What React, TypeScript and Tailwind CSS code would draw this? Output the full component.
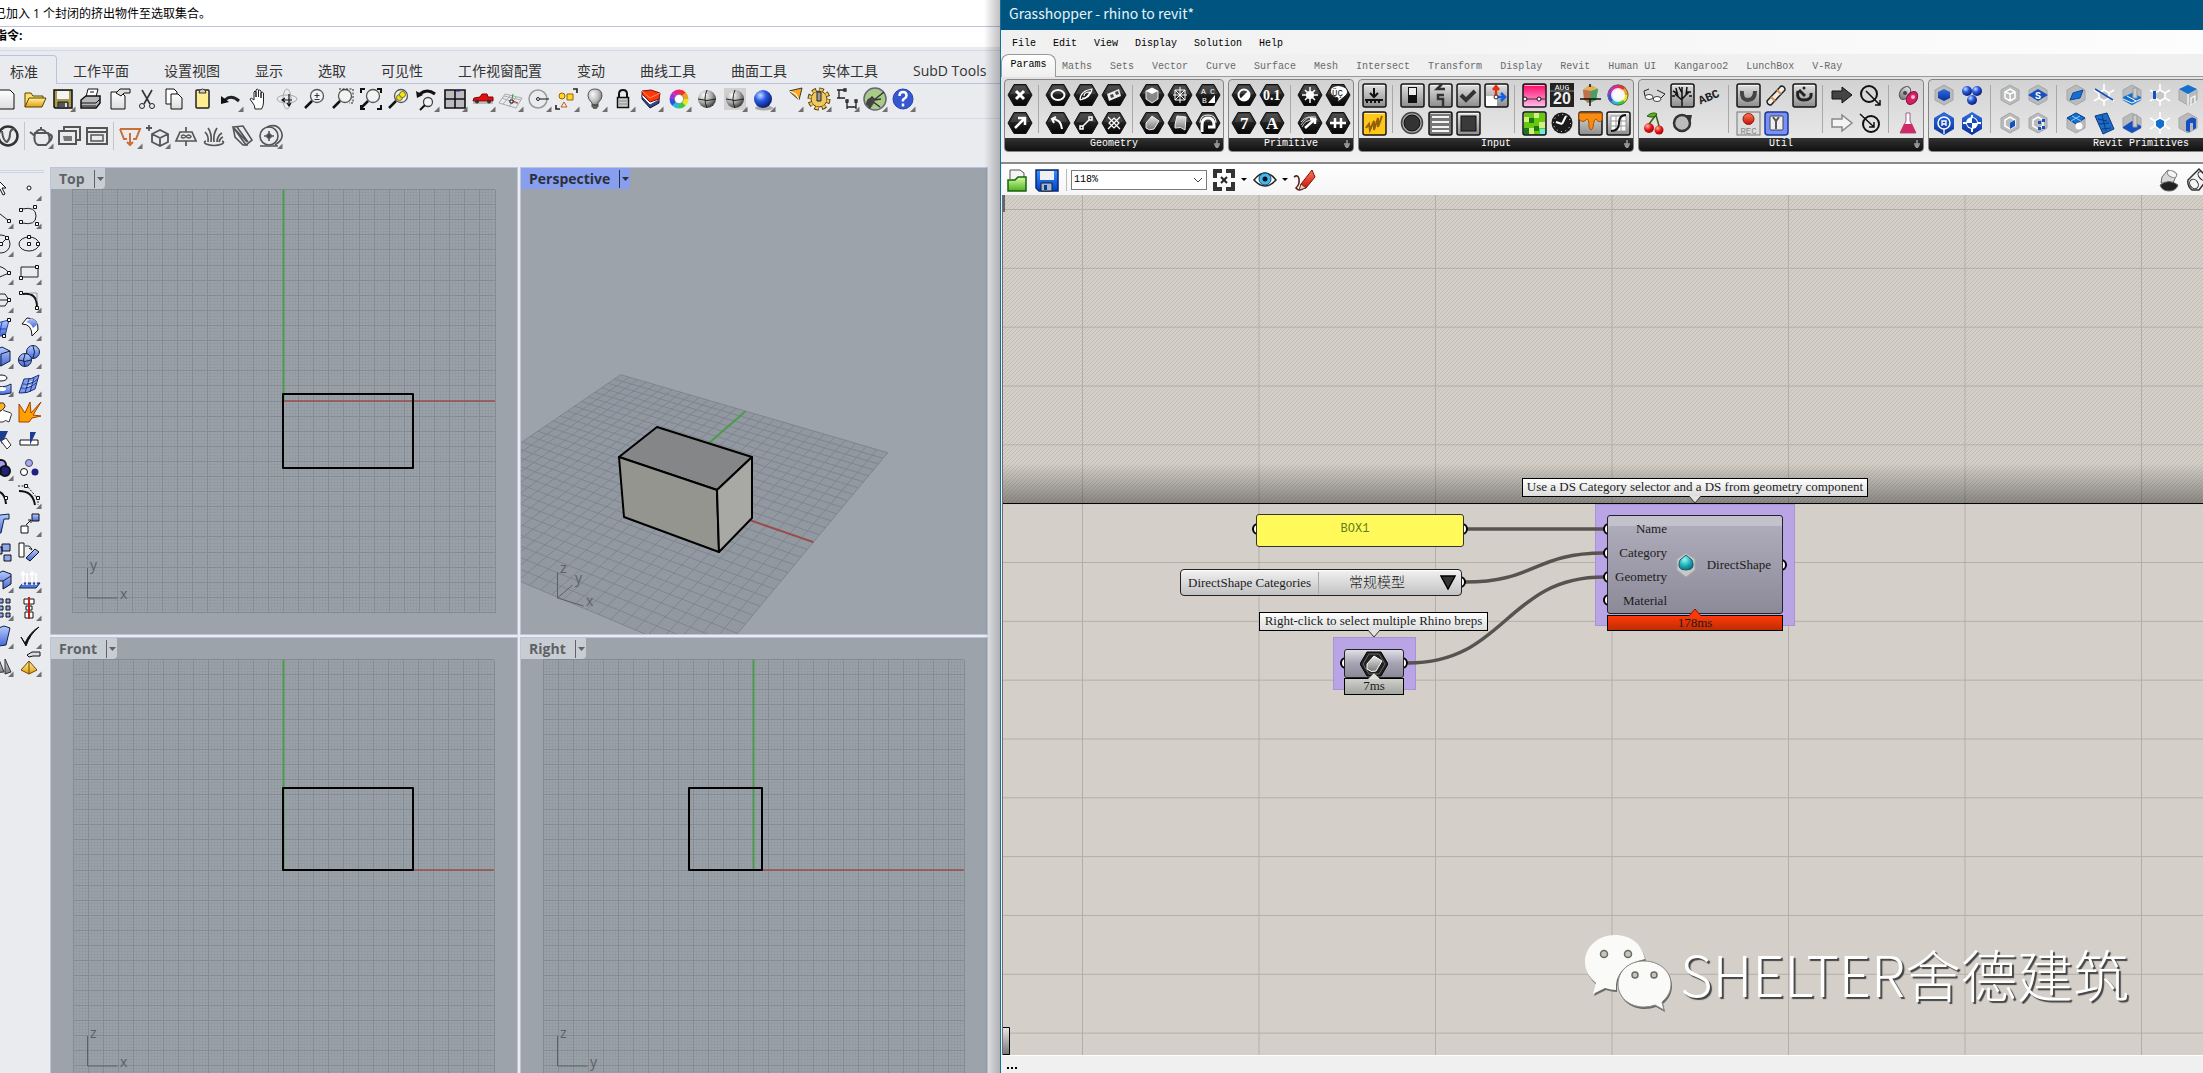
import type { ReactNode } from "react";

interface Tool {
  label: string;
  icon: ReactNode;
  menu?: boolean;
}

const k = "#111111";
const thin = { fill: "none", stroke: "#222", strokeWidth: 1 };
const bold = { fill: "none", stroke: "#111", strokeWidth: 2 };
const grey = { fill: "none", stroke: "#555", strokeWidth: 2 };
const white = { fill: "none", stroke: "#fff", strokeWidth: 2 };

/* shared gradients, referenced by every icon */
function Defs() {
  const ramps: [string, string, string][] = [
    ["gPaper", "#ffffff", "#dcdcdc"],
    ["gGold", "#fff3a0", "#e0a010"],
    ["gBlue", "#b8ccff", "#4468d8"],
    ["gGrey", "#e8e8e8", "#777777"],
    ["gTile", "#e2e2e2", "#8c8c8c"],
    ["gHex", "#3a3a3a", "#050505"],
    ["gRed", "#ff7a50", "#c01010"],
    ["gGreen", "#d4ffa0", "#50b020"],
    ["gSave", "#3a90ff", "#0040d0"],
    ["gPink", "#ff0060", "#ffc0f0"],
    ["gRevit", "#2f6ee0", "#0b2f9c"],
  ];
  return (
    <svg className="absolute size-0" aria-hidden="true">
      <defs>
        {ramps.map(([id, from, to]) => (
          <linearGradient key={id} id={id} x1="0" y1="0" x2="0" y2="1">
            <stop offset="0" stopColor={from} />
            <stop offset="1" stopColor={to} />
          </linearGradient>
        ))}
        <radialGradient id="rGrey" cx=".35" cy=".3" r=".8">
          <stop offset="0" stopColor="#fff" />
          <stop offset=".5" stopColor="#aaa" />
          <stop offset="1" stopColor="#222" />
        </radialGradient>
        <radialGradient id="rBlue" cx=".35" cy=".3" r=".8">
          <stop offset="0" stopColor="#c8e0ff" />
          <stop offset=".4" stopColor="#2a5ae8" />
          <stop offset="1" stopColor="#04104a" />
        </radialGradient>
        <radialGradient id="rRed" cx=".35" cy=".3" r=".8">
          <stop offset="0" stopColor="#ffb0a0" />
          <stop offset=".5" stopColor="#e01818" />
          <stop offset="1" stopColor="#900" />
        </radialGradient>
        <radialGradient id="rTeal" cx=".4" cy=".3" r=".8">
          <stop offset="0" stopColor="#a0f4f4" />
          <stop offset=".5" stopColor="#20b4bc" />
          <stop offset="1" stopColor="#0a5a70" />
        </radialGradient>
      </defs>
    </svg>
  );
}

function Icon({ children, menu }: { children: ReactNode; menu?: boolean }) {
  return (
    <svg viewBox="0 0 28 28" className="size-7" aria-hidden="true">
      {children}
      {menu && <path d="M26.500 21.500v5.500h-5.500z" fill="#6f6f6f" />}
    </svg>
  );
}

function ToolButton({ tool }: { tool: Tool }) {
  return (
    <button type="button" aria-label={tool.label} className="block size-7 shrink-0">
      <Icon menu={tool.menu}>{tool.icon}</Icon>
    </button>
  );
}

const magnifier = (
  <>
    <circle cx="16" cy="11" r="6.500" fill="#f2f4f4" stroke="#555" strokeWidth="1.300" />
    <path d="M11 16l-7 7" stroke="#111" strokeWidth="2.500" />
  </>
);
const colourWheel = (r: number) => (
  <g fill="none" strokeWidth="5">
    {["#f03030", "#f0a020", "#e8e820", "#40c840", "#20c0d8", "#3050e0", "#a030d8", "#e82090"].map((c, i) => (
      <path key={c} d={`M14 ${14 - r}A${r} ${r} 0 0 1 ${14 + r * 0.72} ${14 - r * 0.69}`} stroke={c} transform={`rotate(${i * 45} 14 14)`} />
    ))}
  </g>
);
const wireBall = (fill: string) => (
  <>
    <circle cx="14" cy="14" r="9" fill={fill} />
    <path d="M5 14q9 3 18 0M14 5q-4 9 0 18" fill="none" stroke="#222" />
  </>
);

const standardTools: Tool[] = [
  { label: "新建", icon: <path d="M6 5h11l4 4v15H6z" fill="url(#gPaper)" stroke={k} /> },
  {
    label: "打开",
    icon: (
      <>
        <path d="M4 22V8h6l2 3h10v4" fill="#ffe070" stroke="#5a4000" />
        <path d="M4 22l4-9h17l-4 9z" fill="url(#gGold)" stroke="#5a4000" />
      </>
    ),
  },
  {
    label: "保存",
    menu: true,
    icon: (
      <>
        <path d="M5 5h18v18H6l-1-1z" fill="#a89a50" stroke={k} strokeWidth="1.500" />
        <path d="M8 6h12v8H8z" fill="#f4f4f4" />
        <path d="M9 17h10v6H9z" fill="#555" stroke="#222" />
        <path d="M16 18h2v4h-2z" fill="#ddd" />
      </>
    ),
  },
  {
    label: "打印",
    icon: (
      <>
        <path d="M9 12l2-8h10l-2 8z" fill="#fff" stroke={k} />
        <path d="M4 15l5-4h14v7l-4 5H4z" fill="#b8b8b8" stroke={k} strokeWidth="1.500" />
        <path d="M4 18h15l4-4M4 21h15M13 7h4" fill="none" stroke={k} />
      </>
    ),
  },
  {
    label: "文件属性",
    icon: (
      <>
        <path d="M6 7h10l4 4v13H6z" fill="url(#gPaper)" stroke={k} />
        <path d="M11 8l4-4h10v4h-6l-3 3z" fill="#ddd" stroke={k} />
      </>
    ),
  },
  {
    label: "剪切",
    icon: (
      <>
        <path d="M9 5l8 14M19 5l-8 14" stroke="#333" strokeWidth="1.600" />
        <circle cx="9" cy="21" r="2.500" {...thin} />
        <circle cx="19" cy="21" r="2.500" {...thin} />
      </>
    ),
  },
  {
    label: "复制",
    icon: (
      <>
        <path d="M5 4h8l3 3v12H5z" fill="#fff" stroke={k} />
        <path d="M10 9h7l4 4v11H10z" fill="url(#gPaper)" stroke={k} />
      </>
    ),
  },
  {
    label: "粘贴",
    icon: (
      <>
        <rect x="7" y="5" width="13" height="18" rx="1" fill="#ffee90" stroke="#222" strokeWidth="1.500" />
        <path d="M10 8q0-4 3.500-4t3.500 4z" fill="#ccc" stroke="#333" />
      </>
    ),
  },
  {
    label: "撤销",
    menu: true,
    icon: (
      <>
        <path d="M8 15q6-6 14 1" fill="none" stroke="#222" strokeWidth="3" />
        <path d="M4 11v8l8-2z" fill={k} />
      </>
    ),
  },
  {
    label: "平移",
    icon: (
      <path
        d="M10 24q0-4-3-7l-2-3q1-2 4 1V7q1-2 2 0v5V5q1-2 2.500 0v7V6q1-2 2.500 0v7V8q1-2 2.500 0v9q0 4-2 7z"
        fill="#fff"
        stroke="#222"
      />
    ),
  },
  {
    label: "旋转视图",
    icon: (
      <g fill="none" stroke="#aaa">
        <ellipse cx="14" cy="14" rx="10" ry="4" />
        <ellipse cx="14" cy="14" rx="4" ry="10" />
        <path d="M16 9v11M10 15h9M14 18l2 3 2-3M12 13l-3 2 3 2" stroke="#111" strokeWidth="1.200" />
      </g>
    ),
  },
  { label: "动态缩放", icon: <>{magnifier}<path d="M16 8v5M13.500 10.500h5M13.500 14.500h5" stroke="#333" /></> },
  { label: "框选缩放", icon: <>{magnifier}<path d="M10 4h14v14h-4" fill="none" stroke="#222" strokeDasharray="2 1.500" /></> },
  {
    label: "缩放至最大范围",
    icon: (
      <>
        {magnifier}
        <path d="M4 8V4h4M20 4h4v4M24 20v4h-4M8 24H4v-4" fill="none" stroke="#111" strokeWidth="2" />
      </>
    ),
  },
  { label: "缩放至选取物件", icon: <>{magnifier}<circle cx="14.500" cy="12.500" r="3" fill="#f0e000" stroke="#665" /><circle cx="17.500" cy="9.500" r="3" fill="#f8e800" stroke="#665" /></> },
  {
    label: "上一个视图",
    menu: true,
    icon: (
      <>
        <path d="M7 9q7-6 15 0" {...bold} strokeWidth="3" />
        <path d="M3 6l1 7 6-3z" fill={k} />
        <circle cx="15" cy="17" r="4.500" fill="#f2f4f4" stroke="#444" strokeWidth="1.300" />
        <path d="M12 20l-5 5" {...bold} />
      </>
    ),
  },
  {
    label: "四个视图",
    menu: true,
    icon: (
      <>
        <path d="M4 5h20v18H4z" fill="#bcbcc0" stroke={k} strokeWidth="1.600" />
        <path d="M14 5v18M4 14h20" stroke={k} strokeWidth="1.600" />
        <path d="M15 6h4" stroke="#1020c0" />
      </>
    ),
  },
  {
    label: "车",
    menu: true,
    icon: (
      <>
        <path d="M4 18h20" stroke="#bbb" strokeWidth="2" />
        <path d="M4 16l1-3 6-1 2-3h5l1 3h5v4z" fill="#e01010" stroke="#800" />
        <circle cx="8" cy="16.500" r="2" fill="#333" />
        <circle cx="20" cy="16.500" r="2" fill="#333" />
      </>
    ),
  },
  {
    label: "工作平面",
    menu: true,
    icon: (
      <>
        <path d="M8 9l17 4-6 10-17-5zM5 13l16 6M7 11l17 4M14 10l-8 9M19 12l-7 10" fill="none" stroke="#aaa" />
        <path d="M13 15h3v3h-3z" fill="#fff" stroke={k} />
        <path d="M16 16l5 2" stroke="#c02020" />
        <path d="M16 9l-1 5" stroke="#20a020" />
      </>
    ),
  },
  {
    label: "半径",
    menu: true,
    icon: (
      <>
        <circle cx="13" cy="14" r="9" fill="none" stroke="#999" strokeWidth="1.500" />
        <circle cx="13" cy="14" r="1.500" {...thin} />
        <path d="M15 14h9" stroke="#111" />
      </>
    ),
  },
  {
    label: "物件捕捉",
    menu: true,
    icon: (
      <>
        <circle cx="9" cy="11" r="3" fill="#ffd820" stroke="#a06000" />
        <path d="M14 9h6v6h-6z" fill="#ffd820" stroke="#a06000" />
        <path d="M11 17l3 5H8z" fill="none" stroke="#c06020" />
        <path d="M20 4h4v4M3 20v4h4" {...thin} strokeWidth="1.600" />
      </>
    ),
  },
  {
    label: "灯光",
    menu: true,
    icon: (
      <>
        <path d="M14 4q7 0 7 7 0 3-4 7v4h-6v-4q-4-4-4-7 0-7 7-7z" fill="url(#rGrey)" fillOpacity="0.700" stroke="#555" />
        <path d="M11 20h6M12 23h4" stroke="#444" strokeWidth="1.500" />
      </>
    ),
  },
  {
    label: "锁定",
    menu: true,
    icon: (
      <>
        <path d="M10 13V9q0-4 4-4t4 4v4" {...bold} />
        <rect x="8.500" y="12.500" width="11" height="10" fill="#ccc" stroke={k} strokeWidth="1.500" />
        <path d="M10 16h8M10 19h8" stroke="#888" />
      </>
    ),
  },
  {
    label: "图层",
    menu: true,
    icon: (
      <>
        <path d="M5 14l8 9 9-5v-5l-9 5-8-8z" fill="#2848a0" stroke="#112" />
        <path d="M5 9v3l8 8 9-5v-3l-9 4z" fill="#fff" stroke="#446" />
        <path d="M5 6l9-1 9 3-1 6-9 3-8-8z" fill="#ff3808" stroke="#711" />
        <path d="M5 6l8 7 10-5" fill="none" stroke="#ff9060" />
      </>
    ),
  },
  { label: "颜色", menu: true, icon: <>{colourWheel(7)}<circle cx="14" cy="14" r="4.500" fill="#fff" stroke="#444" strokeWidth="0.500" /></> },
  { label: "着色", icon: wireBall("url(#rGrey)") },
  {
    label: "渲染着色",
    menu: true,
    icon: (
      <>
        <rect x="3" y="3" width="22" height="22" fill="#d0d0d0" />
        {wireBall("url(#rGrey)")}
      </>
    ),
  },
  { label: "渲染", menu: true, icon: <><ellipse cx="15" cy="23" rx="9" ry="2.500" fill="#aaa" /><circle cx="14" cy="14" r="9" fill="url(#rBlue)" /></> },
  { label: "聚光灯", menu: true, icon: <><path d="M12 6l13-3-3 12z" fill="#ffa820" stroke="#333" /><path d="M12 6l7 3 3 6" fill="none" stroke="#fff" /></> },
  {
    label: "选项",
    menu: true,
    icon: (
      <>
        <circle cx="14" cy="14" r="9.500" fill="none" stroke="#5a4000" strokeWidth="4" strokeDasharray="4.500 2.960" />
        <circle cx="14" cy="14" r="8" fill="#f0c860" stroke="#5a4000" />
        <circle cx="14" cy="14" r="9.200" fill="none" stroke="#f0c860" strokeWidth="2.600" strokeDasharray="3 4.220" strokeDashoffset="-0.500" />
        <path d="M12 7h4v9h-4z" fill="#999" stroke="#222" />
      </>
    ),
  },
  {
    label: "尺寸标注",
    menu: true,
    icon: (
      <g {...thin} strokeWidth="1.300">
        <path d="M4 5h8M4 13h8M6 5v8M14 16v8M23 16v8M14 22h9" />
        <path d="M11 4h2v2h-2zM13 15h2v2h-2zM22 15h2v2h-2z" fill="#fff" />
      </g>
    ),
  },
  {
    label: "Grasshopper",
    menu: true,
    icon: (
      <>
        <circle cx="14" cy="14" r="11" fill="#a8cc88" stroke="#667" strokeWidth="1.500" />
        <path d="M6 20q0-5 3-6l2-2 3 3 6-1M13 15L23 7M11 16l8 6" fill="none" stroke="#333" strokeWidth="1.500" />
        <path d="M5 19q1-7 6-6 4 1 2 5l-4 6z" fill="#444" />
      </>
    ),
  },
  {
    label: "说明",
    menu: true,
    icon: (
      <>
        <circle cx="14" cy="14" r="10" fill="#3558d0" stroke="#24a" />
        <path d="M10.500 11q0-4 3.500-4t3.500 3.500q0 2-2 3t-1.500 3M14 18.500v3" {...white} strokeWidth="2.500" />
      </>
    ),
  },
];

const renderTools: Tool[][] = [
  [{ label: "V-Ray", icon: <><circle cx="14" cy="14" r="9.500" {...grey} strokeWidth="2.500" stroke="#333" /><path d="M8 9q1 10 5 11 3-3 3-8t5-5" {...grey} /></> }],
  [
    {
      label: "渲染",
      menu: true,
      icon: (
        <g {...grey}>
          <path d="M8 11q-2 10 3 12h8q6-4 2-12zM8 14l-5-4M22 12q6 2 0 8M9 10q5-5 10 0M14 7V5" />
        </g>
      ),
    },
    {
      label: "帧缓存",
      icon: (
        <g {...grey}>
          <path d="M9 9V5h16v13h-3M4 9h17v13H4z" />
          <path d="M8 14h9v5H9z" fill="#777" stroke="none" />
        </g>
      ),
    },
    { label: "窗口", icon: <g {...grey}><path d="M4 6h20v16H4zM4 10h20" /><path d="M8 13h12v6H8z" strokeWidth="1.500" /></g> },
  ],
  [
    { label: "导出", menu: true, icon: <path d="M4 7h20l-4 10h-3M4 7l4 10h3M14 11v12M11 20l3 3 3-3" fill="none" stroke="#c87038" strokeWidth="2" /> },
    { label: "添加几何体", menu: true, icon: <g {...grey} strokeWidth="1.800"><path d="M8 12l8-4 8 4v8l-8 4-8-4zM8 12l8 4 8-4M16 16v8M5 3v6M2 6h6" /></g> },
    { label: "裁切", icon: <g {...grey} strokeWidth="1.700"><path d="M8 10h12l4 9H4zM14 5v5M14 19v5" /><path d="M9 14.500q2-3 5 0t5 0q-2-3-5 0t-5 0" strokeWidth="1.500" /></g> },
    { label: "毛发", icon: <g {...grey} strokeWidth="1.700"><path d="M6 22q-3-2 0-3M22 22q3-2 0-3M6 22q8 3 16 0M8 20q1-6-3-10M11 20q1-9-3-14M14 20q-1-8 3-14M17 20q0-6 5-9M19 20q1-4 4-5" /></g> },
    { label: "剖面", icon: <g {...grey}><path d="M5 5l10-1 9 14-6 5zM5 5l2 10 8 8h5M9 5l11 15M5 5l14 15" strokeWidth="1.600" /></g> },
    { label: "焦点", menu: true, icon: <g {...grey} strokeWidth="1.600"><circle cx="13" cy="14" r="9" /><path d="M11 5q10-4 14 4t-6 14M13 9v10M8 14h10M4 24h18" /><circle cx="13" cy="14" r="2" fill="#444" /></g> },
  ],
];

const node = (x: number, y: number) => <path d={`M${x - 1.5} ${y - 1.5}h3v3h-3z`} fill="#fff" stroke={k} />;

/* two tools per row: the left one is half hidden by the window edge */
const sideTools: Tool[] = [
  { label: "选择", icon: <path d="M10 5v13l3-3 3 6 2-1-3-6h4z" fill="#fff" stroke={k} /> },
  { label: "点", menu: true, icon: <circle cx="14" cy="14" r="2" fill="#fff" stroke={k} /> },
  { label: "直线", menu: true, icon: <><path d="M8 8l14 11" {...thin} />{node(22, 19)}</> },
  { label: "曲线", menu: true, icon: <><path d="M7 7q14-3 14 7t-14 7" {...thin} />{node(6, 8)}{node(20, 5)}{node(6, 20)}{node(22, 22)}</> },
  { label: "圆", menu: true, icon: <><circle cx="14" cy="14" r="9" {...thin} /><path d="M14 14l6-6" {...thin} />{node(14, 14)}{node(20, 8)}</> },
  { label: "椭圆", menu: true, icon: <><ellipse cx="14" cy="14" rx="10" ry="7" {...thin} />{node(14, 7)}{node(14, 14)}{node(23, 14)}</> },
  { label: "圆弧", menu: true, icon: <><path d="M6 8q10-1 16 7L8 21" {...thin} />{node(22, 15)}</> },
  { label: "矩形", menu: true, icon: <><path d="M6 9h17v10H6z" {...thin} />{node(22, 9)}{node(6, 20)}</> },
  { label: "多边形", menu: true, icon: <><path d="M7 8h11l4 6-4 6H7M9 14h13" {...thin} />{node(22, 14)}</> },
  { label: "圆角曲线", menu: true, icon: <><path d="M8 8q14-2 14 13" {...bold} /><path d="M14 7h8v8" {...thin} stroke="#999" />{node(6, 7)}{node(22, 22)}</> },
  { label: "曲面", menu: true, icon: <><path d="M6 10l16-4-4 16H6z" fill="url(#gBlue)" stroke="#24a" /><path d="M6 15h14M15 8l-3 14" {...thin} stroke="#24a" />{node(22, 6)}{node(17, 22)}</> },
  { label: "单轨扫掠", menu: true, icon: <><path d="M7 10l5-6q12 0 11 12l-6 6q0-12-10-12z" fill="#fff" stroke={k} /><path d="M11 8l5-4q5 2 7 6l-5 4q-2-5-7-6z" fill="url(#gBlue)" /></> },
  { label: "立方体", menu: true, icon: <><path d="M6 9l9-4 8 4v10l-9 5-8-3z" fill="url(#gBlue)" stroke="#123" /><path d="M14 12l9-3M14 12v12" stroke="#124" fill="none" /></> },
  { label: "球体", menu: true, icon: <><circle cx="18" cy="10" r="6.500" fill="url(#gBlue)" stroke="#124" /><circle cx="10" cy="18" r="6.500" fill="url(#gBlue)" stroke="#124" /><path d="M4 18q6 3 12 0M10 12q-3 6 0 12M18 4q3 6 0 12" {...thin} stroke="#124" /></> },
  { label: "管道", menu: true, icon: <><ellipse cx="14" cy="8" rx="6" ry="3" fill="#fff" stroke={k} /><path d="M6 15q10 4 18-1v9q-8 3-18 0z" fill="url(#gBlue)" stroke="#124" /><ellipse cx="14" cy="19" rx="5" ry="2" fill="#fff" /></> },
  { label: "网格曲面", menu: true, icon: <path d="M9 9q7 1 15-4l-4 14q-8 5-16 4zM8 14q7 1 15-5M6 18q8 1 15-5M14 9l-4 14M19 8l-4 14" fill="#7c9cf0" stroke="#1a3080" /> },
  { label: "组合", icon: <><path d="M10 5h4q4-1 4 4l-4 4h-5z" fill="#ffb020" stroke="#333" /><path d="M8 14l6-1q1-3 4 0l3 1q5 1 3 4l-2 6q-4-3-6 0H9z" fill="#fff" stroke="#333" /></> },
  { label: "炸开", icon: <path d="M4 24V6l6 9 5-11 1 11L26 4l-8 13 8 1-9 2-3 4z" fill="#ffa000" stroke="#a04000" /> },
  { label: "修剪", icon: <><path d="M8 5h13l-6 13z" fill="#1c3c90" /><path d="M14 15l5-3 5 7-4 4z" fill="#fff" stroke="#333" /></> },
  { label: "分割", icon: <><path d="M5 14h18v5H5z" fill="#fff" stroke={k} /><path d="M15 6h6l-6 13z" fill="#1c3c90" /></> },
  { label: "群组", menu: true, icon: <><circle cx="14" cy="11" r="5" fill="#a0a0f0" stroke={k} strokeWidth="2" /><circle cx="18" cy="17" r="5" fill="#202080" stroke={k} strokeWidth="2" /><circle cx="9" cy="17" r="5" fill="#fff" stroke={k} strokeWidth="2" /></> },
  { label: "解散群组", icon: <><circle cx="14" cy="9" r="3.500" fill="#a8a8f0" stroke="#446" /><circle cx="9" cy="18" r="3.500" fill="#fff" stroke={k} /><circle cx="20" cy="18" r="3.500" fill="#202080" /></> },
  { label: "编辑控制点", icon: <><path d="M8 9q10 0 11 13" {...bold} />{node(19, 16)}</> },
  { label: "编辑点", menu: true, icon: <><path d="M4 9q14 0 16 14" {...bold} /><path d="M3 4h9l11 13v6" {...thin} strokeDasharray="2 1.500" />{node(11, 4)}{node(23, 16)}</> },
  { label: "文字", icon: <path d="M5 6l17-2v5h-5l-3 14H9l2-14H5z" fill="url(#gBlue)" stroke="#124" /> },
  { label: "移动", menu: true, icon: <><path d="M17 4h7v7h-7z" fill="url(#gBlue)" stroke={k} /><path d="M6 16h7v7H6zM11 15l5-5M16 13v-3h-3" fill="#fff" stroke={k} /></> },
  { label: "复制物件", icon: <path d="M15 6h8v7h-8zM8 9h7v7H8zM17 17h7v6h-7z" fill="#90a8f0" stroke={k} /> },
  { label: "旋转", icon: <><path d="M4 5h5v14H4z" fill="#fff" stroke={k} /><path d="M11 20l9-9 4 3-9 9z" fill="url(#gBlue)" stroke={k} /><path d="M10 8q6-1 7 4M14 10l3 2" {...thin} /></> },
  { label: "实体", menu: true, icon: <><path d="M5 10l11-5 8 3v10l-8 5v-8H5z" fill="url(#gBlue)" stroke="#112" /><path d="M16 15l8-5" {...thin} /></> },
  { label: "对齐", menu: true, icon: <><path d="M8 17h17l-4 5H4z" fill="#5078e0" stroke="#124" /><path d="M8 19V7M12 19V7M17 19V7M21 19V7M6 9l2-3 2 3M15 9l2-3 2 3" {...white} strokeWidth="1.600" /></> },
  { label: "阵列", menu: true, icon: <path d="M5 5h4v4H5zM12 5h4v4h-4zM19 5h4v4h-4zM5 12h4v4H5zM12 12h4v4h-4zM19 12h4v4h-4zM12 19h4v4h-4zM19 19h4v4h-4z" fill="#90a8f0" stroke={k} /> },
  { label: "分布", menu: true, icon: <><path d="M9 5h10v5H9zM11 12h6v4h-6zM10 18h8v6h-8z" fill="#fff" stroke={k} /><path d="M14 3v22" stroke="#c02020" strokeWidth="2" /></> },
  { label: "弯曲", menu: true, icon: <path d="M9 7l8-3 6 2-4 17-7 1z" fill="url(#gBlue)" stroke="#124" /> },
  { label: "检查", menu: true, icon: <path d="M6 15l4 6Q15 10 24 5q-9 7-13 19z" fill={k} stroke={k} /> },
  { label: "显示", menu: true, icon: <path d="M11 7l6 15-12 1zM18 9l6 13-6 2z" fill="url(#gGrey)" stroke="#333" /> },
  { label: "金字塔", menu: true, icon: <><path d="M14 11l8 9-8 4-8-4z" fill="url(#gGold)" stroke="#740" /><path d="M14 11v13" stroke="#740" /><path d="M12 5l5-3h8v4h-7l-4 1z" fill="#ddd" stroke={k} /></> },
];

const hex = (icon: ReactNode) => (
  <>
    <path d="M2 14L8 3.500h12L26 14l-6 10.500H8z" fill="url(#gHex)" stroke="#111" strokeLinejoin="round" />
    <path d="M4 13l5-8h10l5 8z" fill="#fff" fillOpacity="0.120" />
    {icon}
  </>
);
const tile = (icon: ReactNode, fill = "url(#gTile)") => (
  <>
    <rect x="3" y="3" width="23" height="23" rx="2" fill={fill} stroke="#151515" strokeWidth="1.500" />
    <path d="M4.500 4.500h20" stroke="#fff" strokeOpacity="0.700" />
    {icon}
  </>
);
const revit = (icon: ReactNode) => (
  <>
    <path d="M14 4l9 5v10l-9 5-9-5V9z" fill="#b8babc" stroke="#a4a6a8" />
    {icon}
  </>
);
const spokes = <path d="M14 9l5 3v5l-5 3-5-3v-5zM14 9V3M19 12l5-3M19 17l5 3M14 20v5M9 17l-5 3M9 12L4 9" fill="#c4c6c8" stroke="#fff" strokeWidth="1.600" />;
const glyph = "font-['Liberation_Serif',serif] font-bold";

type Pair = [Tool, Tool?];
interface Panel {
  name: string;
  groups: Pair[][];
  width: string;
}
const t = (label: string, icon: ReactNode): Tool => ({ label, icon });

const panels: Panel[] = [
  {
    name: "Geometry",
    width: "",
    groups: [
      [[t("Geometry", hex(<path d="M10 10l8 8M18 10l-8 8" {...white} strokeWidth="3" />)), t("Vector", hex(<path d="M9 19l9-9M12 9h7v7" {...white} strokeWidth="2.500" />))]],
      [
        [t("Circle", hex(<ellipse cx="14" cy="14" rx="6.500" ry="5" {...white} />)), t("Arc", hex(<path d="M8 10q9 0 10 10M12 8l-4 2 2 4" {...white} />))],
        [t("Curve", hex(<path d="M8 19q0-9 12-11-1 9-12 11M10 17q5 1 8-6-6 0-6 4" {...white} strokeWidth="1.200" />)), t("Line", hex(<path d="M10 18l8-8M8 17h3v3H8zM17 8h3v3h-3z" {...white} strokeWidth="1.500" />))],
        [t("Plane", hex(<><path d="M7 13l12-5 2 7-12 5z" fill="#eee" /><path d="M10 14l3-1 1 3-3 1zM15 11l3-1 1 3-3 1z" fill="#444" /></>)), t("Rectangle", hex(<path d="M14 9l5 5-5 5-5-5zM8 8l12 12M20 8L8 20" {...white} strokeWidth="1.200" />))],
      ],
      [
        [t("Box", hex(<><path d="M14 7l6 3v8l-6 4-6-4v-8z" fill="#888" stroke="#eee" /><path d="M8 10l6-3 6 3-6 3z" fill="#fff" /></>)), t("Brep", hex(<path d="M8 14l6-7 7 5-5 8q-5 2-8-1z" fill="url(#gGrey)" stroke="#eee" />))],
        [t("Mesh", hex(<path d="M14 6v16M7 14h14M9 9l10 10M19 9L9 19M9 9h10v10H9z" {...white} strokeWidth="1" />)), t("Surface", hex(<path d="M9 16l2-9 9 1-1 13q-4-4-10-2z" fill="url(#gGrey)" stroke="#eee" />))],
        [t("Field", hex(<><text x="7" y="13" fontSize="8" fill="#fff">A</text><text x="16" y="13" fontSize="8" fill="#fff">C</text><text x="8" y="22" fontSize="8" fill="#fff">B</text><path d="M21 14v8h-7z" fill="#fff" /></>)), t("SubD", hex(<><path d="M8 23v-7q0-7 6-7t6 7v2h-6" {...white} strokeWidth="3" /><path d="M6 14q0-8 8-8t8 8" {...white} strokeWidth="1" /></>))],
      ],
    ],
  },
  {
    name: "Primitive",
    width: "",
    groups: [
      [
        [t("Boolean", hex(<><circle cx="14" cy="14" r="5.500" {...white} /><path d="M10 18A5.500 5.500 0 0 0 18 10z" fill="#fff" /></>)), t("Integer", hex(<text x="10" y="20" fontSize="17" fill="#fff" className={glyph}>7</text>))],
        [t("Number", hex(<text x="5" y="19" fontSize="14" fill="#fff" className={glyph}>0.1</text>)), t("Text", hex(<text x="8" y="20" fontSize="17" fill="#fff" className={glyph}>A</text>))],
      ],
      [
        [t("Colour", hex(<><path d="M14 6v16M6 14h16M9 9l10 10M19 9L9 19" {...white} strokeWidth="1.500" /><circle cx="14" cy="14" r="4" fill="#fff" /></>)), t("Domain", hex(<><path d="M9 19l9-8M14 10h5v5" {...white} strokeWidth="2.500" /><path d="M5 13q7-9 16-2M5 16q6-10 15-8M6 18q3-7 10-7" {...white} strokeWidth="0.700" /></>))],
        [t("Culture", hex(<><path d="M7 7q7-5 15 0 4 5-2 9l-6 5v-4q-10-2-7-10z" fill="#fff" stroke="#222" /><text x="8" y="15" fontSize="9" fill="#111">ÜÇ</text></>)), t("Range", hex(<path d="M6 14h16M11 9v10M17 9v10" {...white} strokeWidth="2.500" />))],
      ],
    ],
  },
  {
    name: "Input",
    width: "",
    groups: [
      [[t("Slider", tile(<path d="M14 7v8M10 12l4 4 4-4M5 19h18M7 19v3M11 19v3M15 19v3M19 19v3" {...bold} />)), t("Graffiti", tile(<path d="M6 19l3-4 1 6 4-9v9l4-12v9l4-11" fill="none" stroke="#94600c" strokeWidth="2" />, "#ffc818"))]],
      [
        [t("Toggle", tile(<><path d="M10 6h9v16h-9z" fill="#111" /><path d="M11 7h7v7h-7z" fill="#eee" /></>)), t("Knob", <><circle cx="14" cy="14" r="10.500" fill="#aaa" stroke="#444" strokeWidth="1.500" /><circle cx="14" cy="14" r="8" fill="#333" stroke="#111" /></>)],
        [t("Digit Scroller", tile(<path d="M16 3l-5 5h8M18 14h-6v4h5v7" fill="none" stroke="#333" strokeWidth="2.500" />)), t("Value List", tile(<path d="M6 8h17M6 13h17M6 18h17M6 22h17" stroke="#f4f4f4" strokeWidth="2" />, "#777"))],
        [t("Boolean Toggle", tile(<path d="M7 14l5 5 9-9" {...bold} stroke="#333" strokeWidth="4" />)), t("Button", tile(<rect x="7" y="7" width="15" height="15" fill="#3a3a3a" stroke="#111" />))],
        [t("MD Slider", tile(<><path d="M4 15h11v10H4z" fill="#fff" /><path d="M14 14V6M11 9l3-4 3 4" stroke="#e03010" strokeWidth="2.500" fill="none" /><path d="M14 16h8M19 12l4 4-4 4" stroke="#1060e0" strokeWidth="2.500" fill="none" /><circle cx="14" cy="16" r="2" fill="#fff" stroke="#222" /></>))],
      ],
      [
        [
          t("Gradient", tile(<><path d="M4 18h21" stroke="#333" /><circle cx="5" cy="18" r="2" fill="#fff" stroke="#111" /><circle cx="19" cy="18" r="2" fill="#fff" stroke="#111" /></>, "url(#gPink)")),
          t("Image Sampler", tile(<><path d="M4 4h21v21H4z" fill="#68c810" /><path d="M4 8h5v5H4zM14 4h5v5h-5zM19 13h6v6h-6zM9 19h5v6H9z" fill="#d0f080" /><path d="M9 9h5v5H9zM4 19h5v6H4zM14 17h5v5h-5z" fill="#187818" /><path d="M20 20h5v5h-5z" fill="#60f0e0" /></>)),
        ],
        [t("Calendar", <><path d="M2 2h24v24H2z" fill="#222" /><path d="M2 10h24" stroke="#888" /><text x="14" y="9" fontSize="8" textAnchor="middle" fill="#fff">AUG</text><text x="14" y="23" fontSize="16" fontWeight="bold" textAnchor="middle" fill="#eee" className="font-['Liberation_Sans',sans-serif]">20</text></>), t("Clock", <><circle cx="14" cy="14" r="10.500" fill="#1a1a1a" /><path d="M14 15l4-8M14 15l-6-2" {...white} /><circle cx="14" cy="14" r="8.500" fill="none" stroke="#fff" strokeDasharray="1 3.450" /></>)],
        [t("Colour Swatch", <><path d="M7 9l7-5 8 4-2 11-9 3z" fill="#50a050" /><path d="M7 9l8 1 7-2-8-4z" fill="#e8b050" /><path d="M15 10l7-2-2 11-6 3z" fill="#48a068" /><path d="M7 9l8 1-1 12-6-3z" fill="#c07050" /><path d="M4 18h21M14 18v7M14 3v3" stroke="#111" strokeWidth="1.500" /></>), t("Paint", tile(<path d="M3 4h23v7q-3 4-6-1-2 0-3 8-2 6-4 0 0-8-2-8-4 5-8 0z" fill="#f88c10" stroke="#b05000" />))],
        [t("Colour Picker", <>{colourWheel(8)}<circle cx="14" cy="14" r="7" fill="#fff" fillOpacity="0.850" /><circle cx="14" cy="14" r="10" fill="none" stroke="#666" /></>), t("Graph Mapper", tile(<><path d="M7 7h15v15H7zM12 7v15M17 7v15M7 12h15M7 17h15" fill="#fff" stroke="#999" /><path d="M7 22q8 0 8-8t7-8" {...bold} /></>))],
      ],
    ],
  },
  {
    name: "Util",
    width: "",
    groups: [
      [
        [t("Param Viewer", <><ellipse cx="9" cy="16" rx="4" ry="2.500" fill="#fff" stroke="#444" /><ellipse cx="17" cy="18" rx="4" ry="2.500" fill="#fff" stroke="#444" /><path d="M5 15L4 10l5-2M21 17l4-4-8-4M13 17l1 1" {...thin} /></>), t("Cherry Picker", <><circle cx="9" cy="19" r="5" fill="url(#rRed)" /><circle cx="19" cy="21" r="4.500" fill="url(#rRed)" /><path d="M9 15l7-9 3 11" fill="none" stroke="#386010" strokeWidth="1.500" /><path d="M7 7q6-5 10-2-3 5-10 2z" fill="#60b020" stroke="#286008" /></>)],
        [t("Tree", tile(<path d="M14 25v-9M14 19l-7-6M14 18l7-7M14 16V6M10 16l-2-9M18 14l1-8M14 12l-3-6M5 10l5 3M23 11h-5M7 15H4M21 15h3" {...bold} strokeWidth="1.500" />)), t("Jump", <><circle cx="14" cy="14" r="8" fill="#bbb" stroke="#333" strokeWidth="2.500" /><path d="M17 6h7l-2 9z" fill="#333" /></>)],
        [t("Scribble", <text x="2" y="20" fontSize="12" fontWeight="bold" transform="rotate(-22 12 16)" fill="#222">ABC</text>)],
      ],
      [
        [t("Data Dam", tile(<path d="M8 10q-1 9 6 9t7-9" {...bold} stroke="#444" strokeWidth="4" />)), t("Recorder", <><rect x="3" y="3" width="23" height="23" fill="#ddd" stroke="#777" /><circle cx="14.500" cy="10" r="5.500" fill="url(#gRed)" stroke="#902000" /><text x="14.500" y="25" fontSize="9" textAnchor="middle" fill="#888">REC</text></>)],
        [t("Cluster", <><path d="M5 20L19 5q4 0 4 4L9 24q-4 0-4-4z" fill="#eee" stroke="#222" strokeWidth="1.500" /><path d="M9 16l4 4M15 9l4 4" stroke="#e09040" strokeWidth="2" /></>), t("Zip", <><rect x="3" y="3" width="23" height="23" rx="3" fill="#7890f8" stroke="#1a3a90" strokeWidth="1.500" /><rect x="8" y="7" width="13" height="14" rx="1" fill="#eee" stroke="#445" /><path d="M11 8l3 4 3-4M14 12v8" {...grey} /></>)],
        [t("Timer", tile(<><path d="M8 10q-2 9 6 9t7-7M15 15l-6-6" {...bold} stroke="#222" strokeWidth="3" /><circle cx="14" cy="7" r="1.500" fill="#222" /></>))],
      ],
      [
        [t("Relay", <path d="M4 10h10V6l10 8-10 8v-4H4z" fill="#444" stroke="#111" />), t("Relay out", <path d="M4 10h10V6l10 8-10 8v-4H4z" fill="#f4f4f4" stroke="#888" strokeWidth="1.500" />)],
        [t("Galapagos", <><circle cx="13" cy="13" r="8" {...bold} /><path d="M10 10l14 14M24 19v5h-5" {...bold} strokeWidth="1.500" /></>), t("Galapagos in", <><circle cx="15" cy="15" r="8" {...bold} /><path d="M4 5l14 13M18 13v5h-5" {...bold} strokeWidth="1.500" /></>)],
      ],
      [[t("Fitness", <><ellipse cx="11" cy="12" rx="5" ry="7" transform="rotate(35 11 12)" fill="url(#gGrey)" stroke="#555" /><ellipse cx="18" cy="17" rx="5" ry="7" transform="rotate(35 18 17)" fill="#d82060" stroke="#801040" /><circle cx="11" cy="12" r="2" fill="#444" /><circle cx="19" cy="16" r="2" fill="#fbd" /></>), t("Flask", <><path d="M12 4h4v8l6 12H6l6-12z" fill="#fff" stroke="#a06080" /><path d="M10 15h8l4 9H6z" fill="#d02868" /></>)]],
    ],
  },
  {
    name: "Revit Primitives",
    width: "min-w-[426px]",
    groups: [
      [
        [t("Element", revit(<path d="M14 8l6 3v6l-6 3-6-3v-6z" fill="url(#gRevit)" />)), t("Assembly", <><path d="M14 3l10 6v11l-10 6-10-6V9z" fill="url(#gRevit)" /><circle cx="14" cy="14" r="6" {...white} strokeWidth="1.500" /><path d="M12 17v-5h4v5M12 15h4M14 20v5" {...white} strokeWidth="1.300" /></>)],
        [t("Types", <g fill="url(#rBlue)"><circle cx="9" cy="10" r="5" /><circle cx="19" cy="10" r="5" /><circle cx="14" cy="19" r="5" /></g>), t("Origin", <><path d="M14 3l10 6v11l-10 6-10-6V9z" fill="url(#gRevit)" /><path d="M14 6v17M5 14h18" {...white} /><circle cx="14" cy="14" r="6" fill="#fff" /><path d="M14 9v5h5A5 5 0 0 0 14 9M14 19v-5H9a5 5 0 0 0 5 5" fill="#124ab8" /></>)],
      ],
      [
        [t("Family", revit(<path d="M14 8l5 3v6l-5 3-5-3v-6zM14 13v7M9 11l5 2 5-2" {...white} strokeWidth="1.500" />)), t("Category", revit(<><path d="M14 8l5 3v6l-5 3-5-3v-6z" {...white} strokeWidth="1.500" /><path d="M14 14l5-3v6l-5 3z" fill="#1450c0" /></>))],
        [t("Symbol", revit(<><path d="M14 8l10 6-10 6-10-6z" fill="#1450c0" /><text x="14" y="18" fontSize="10" fontWeight="bold" textAnchor="middle" fill="#fff">S</text></>)), t("Parameter", revit(<><path d="M14 8l5 3v6l-5 3-5-3v-6z" {...white} strokeWidth="1.500" /><path d="M14 12h3v3h-3zM18 10h3v3h-3zM14 18h3v3h-3zM18 17h3v3h-3z" fill="#1450c0" /></>))],
      ],
      [
        [t("Roof", revit(<path d="M11 12l10-3-3 8-10 2z" fill="#1470d0" stroke="#0b4a9c" />)), t("Floor", revit(<><path d="M14 4l9 5-9 6-9-6z" fill="#1470d0" stroke="#0b3a8c" /><path d="M10 7l9 5M18 7l-9 5" stroke="#8cf" /><circle cx="17" cy="17" r="3.500" fill="#fff" /></>))],
        [t("Grid", <>{spokes}<path d="M5 8l18 11" stroke="#1450c0" strokeWidth="1.500" /></>), t("Curtain Panel", <path d="M5 7l12-3 7 16-11 5zM8 10l9 2M9 15l10-1M12 20l9-1M12 6l4 16" fill="#1c6cc8" stroke="#0b3a7c" />)],
        [t("Level", revit(<><path d="M5 16l9-4 9 4v3l-9 5-9-5z" fill="#1470d0" /><path d="M15 7h4v10h-4z" fill="#ccc" stroke="#999" /><path d="M5 18l9 4 9-4M9 15l9 5" {...white} strokeWidth="1" /></>)), t("Column", revit(<><path d="M5 18l9-6 9 5v2l-9 5-9-5z" fill="#1450c0" /><path d="M15 6h4v12h-4z" fill="#ccc" stroke="#999" /></>))],
        [t("Beam", <>{spokes}<path d="M7 10h3v8H7z" fill="#1450c0" /></>), t("Joint", <>{spokes}<path d="M14 10l4 2v5l-4 3-4-3v-5z" fill="#1470d0" /></>)],
        [t("Ceiling", revit(<><path d="M14 4l9 4-9 5-9-5z" fill="#1470d0" /><path d="M14 13v11M17 24v-7l4-2v7" {...white} strokeWidth="1.200" /></>)), t("Door", revit(<path d="M12 22V12q6-6 10-2v9l-3 2v-7h-3v9z" fill="#1450c0" />))],
      ],
    ],
  },
];

const rhinoTabs = ["工作平面", "设置视图", "显示", "选取", "可见性", "工作视窗配置", "变动", "曲线工具", "曲面工具", "实体工具", "SubD Tools"];
const menus = ["File", "Edit", "View", "Display", "Solution", "Help"];
const ghTabs = ["Maths", "Sets", "Vector", "Curve", "Surface", "Mesh", "Intersect", "Transform", "Display", "Revit", "Human UI", "Kangaroo2", "LunchBox", "V-Ray"];

function gridPath(x: number, y: number, size: number, count: number) {
  let d = "";
  for (let i = 0; i <= count; i++) {
    const o = (i * size) / count;
    d += `M${x + o} ${y}v${size}M${x} ${y + o}h${size}`;
  }
  return d;
}

interface OrthoProps {
  x: number;
  size: number;
  box: [number, number, number, number];
  gizmoY: number;
  axes: [string, string];
}

function OrthoView({ x, size, box, gizmoY, axes }: OrthoProps) {
  const y = 21.5;
  const cx = x + size / 2;
  const cy = y + size / 2;
  return (
    <svg viewBox="0 0 466 466" className="block w-full">
      <rect x={x} y={y} width={size} height={size} fill="#9aa1a9" />
      <g shapeRendering="crispEdges" fill="none">
        <path d={gridPath(x, y, size, 140)} stroke="#929aa2" />
        <path d={gridPath(x, y, size, 28)} stroke="#858b94" />
      </g>
      <path d={`M${cx} ${y}V${cy}`} stroke="#4c9a4c" strokeWidth="2" />
      <path d={`M${cx} ${cy}H${x + size}`} stroke="#984c4c" strokeWidth="1.500" />
      <rect x={box[0]} y={box[1]} width={box[2]} height={box[3]} fill="none" stroke="#000" strokeWidth="2" strokeLinejoin="round" />
      <path d={`M36.500 ${gizmoY - 30}v30h30`} fill="none" stroke="#5c6066" />
      <g fontSize="14" fill="#5c6066" className="font-['Open_Sans',sans-serif]">
        <text x="39" y={gizmoY - 28}>{axes[0]}</text>
        <text x="69" y={gizmoY + 1}>{axes[1]}</text>
      </g>
    </svg>
  );
}

/* projects the unit square onto the ground plane quad */
function project(u: number, v: number): string {
  const [x0, y0, x1, y1, x2, y2, x3, y3] = [99.7, 206.7, 366.7, 284.7, 192.1, 494.7, -125.9, 360.6];
  const dx1 = x1 - x2, dx2 = x3 - x2, sx = x0 - x1 + x2 - x3;
  const dy1 = y1 - y2, dy2 = y3 - y2, sy = y0 - y1 + y2 - y3;
  const det = dx1 * dy2 - dx2 * dy1;
  const g = (sx * dy2 - dx2 * sy) / det;
  const h = (dx1 * sy - sx * dy1) / det;
  const w = g * u + h * v + 1;
  const px = ((x1 - x0 + g * x1) * u + (x3 - x0 + h * x3) * v + x0) / w;
  const py = ((y1 - y0 + g * y1) * u + (y3 - y0 + h * y3) * v + y0) / w;
  return `${px.toFixed(1)} ${py.toFixed(1)}`;
}

function planePath(count: number) {
  let d = "";
  for (let i = 0; i <= count; i++) {
    const s = i / count;
    d += `M${project(s, 0)}L${project(s, 1)}M${project(0, s)}L${project(1, s)}`;
  }
  return d;
}

function PerspectiveView() {
  return (
    <svg viewBox="0 0 466 466" className="block w-full">
      <path d={`M${project(0, 0)}L${project(1, 0)}L${project(1, 1)}L${project(0, 1)}z`} fill="#949ba3" />
      <path d={planePath(140)} stroke="#8c939c" strokeWidth="0.500" strokeOpacity="0.400" />
      <path d={planePath(28)} stroke="#7d838c" strokeWidth="0.900" />
      <path d={`M${project(0.5, 0.5)}L${project(0.5, 0)}`} stroke="#4c9a4c" strokeWidth="2" />
      <path d={`M${project(0.5, 0.5)}L${project(1, 0.5)}`} stroke="#984c4c" strokeWidth="2" />
      <g stroke="#000" strokeWidth="2" strokeLinejoin="round">
        <path d="M98 289L136 259L231 289L196 322z" fill="#858688" />
        <path d="M98 289L196 322L198 384L103 349z" fill="#959590" />
        <path d="M196 322L231 289V350L198 384z" fill="#a8a8a4" />
      </g>
      <path d="M36.500 404v26l15-13M36.500 430l26 8" fill="none" stroke="#5c6066" />
      <g fontSize="14" fill="#5c6066" className="font-['Open_Sans',sans-serif]">
        <text x="39" y="405">z</text>
        <text x="54" y="415">y</text>
        <text x="65" y="438">x</text>
      </g>
    </svg>
  );
}

function Viewport({ name, active, children }: { name: string; active?: boolean; children: ReactNode }) {
  return (
    <section className="relative aspect-square overflow-hidden border border-[#bcc3dc] bg-[#9ca3aa]">
      {children}
      <div className={"absolute left-0 top-0 flex h-[21px] items-center rounded-br-sm pl-2 " + (active ? "bg-[#889ff0] text-[#2c3038]" : "bg-[#c8cdd3] text-[#5e6266]")}>
        <h2 className="pr-[9px] text-[14px] font-bold leading-[20px]">{name}</h2>
        <button type="button" aria-label={name + " menu"} className="flex h-[18px] w-[11px] items-center border-l border-current pl-[2px]">
          <svg viewBox="0 0 7 4" className="h-1 w-[7px]" aria-hidden="true">
            <path d="M0 0h7L3.500 4z" fill="currentColor" />
          </svg>
        </button>
      </div>
    </section>
  );
}

function Rhino() {
  return (
    <div className="relative flex min-w-0 flex-col overflow-hidden bg-[#eaebef] font-['Open_Sans','Noto_Sans_CJK_SC',sans-serif] text-[#333]">
      <p className="h-[27px] shrink-0 whitespace-nowrap border-b border-[#bcc3dc] bg-white text-[12px] leading-[28px] text-black">
        <span className="-ml-[6px]">已加入 1 个封闭的挤出物件至选取集合。</span>
      </p>
      <p className="h-5 shrink-0 bg-white text-[12px] font-bold leading-[18px] text-black">
        <span className="-ml-[5px]">指令:</span>
      </p>
      <nav className="mt-[3px] flex h-[34px] shrink-0 items-end whitespace-nowrap border-t border-[#d5d8e8] text-[14px] leading-[20px]">
        <button type="button" className="h-[29px] w-[57px] rounded-tr border-r border-t border-[#bcc3dc] pl-[10px] pt-1 text-left">标准</button>
        <div className="flex h-[29px] flex-1 gap-[35px] border-b border-[#bcc3dc] pl-4 pt-1">
          {rhinoTabs.map((tab) => (
            <button key={tab} type="button">{tab}</button>
          ))}
        </div>
      </nav>
      <div className="flex h-[35px] shrink-0 items-center border-b border-[#d5d8e8] pb-1">
        <div className="-ml-[7px] flex">
          {standardTools.map((tool) => <ToolButton key={tool.label} tool={tool} />)}
        </div>
      </div>
      <div className="flex h-12 shrink-0 items-start pt-[3px]">
        <div className="-ml-[6px] flex">
          {renderTools.map((group, i) => (
            <div key={i} className="flex">
              {i > 0 && <span className="mx-[2px] h-7 w-px bg-[#c4c6cc]" />}
              {group.map((tool) => <ToolButton key={tool.label} tool={tool} />)}
            </div>
          ))}
        </div>
      </div>
      <div className="flex min-h-0 flex-1">
        <aside className="w-[50px] shrink-0 overflow-hidden pt-[3px]">
          <div className="h-[3px] w-11 border-y border-[#cdd3e8]" />
          <div className="-ml-[13px] mt-px grid w-14 grid-cols-2">
            {sideTools.map((tool) => <ToolButton key={tool.label} tool={tool} />)}
          </div>
        </aside>
        <main className="grid min-w-0 flex-1 auto-rows-max grid-cols-2 content-start gap-[2px] overflow-hidden">
          <Viewport name="Top">
            <OrthoView x={21} size={423} box={[232, 226, 130, 74]} gizmoY={430} axes={["y", "x"]} />
          </Viewport>
          <Viewport name="Perspective" active>
            <PerspectiveView />
          </Viewport>
          <Viewport name="Front">
            <OrthoView x={22} size={421} box={[232, 150, 130, 82]} gizmoY={428} axes={["z", "x"]} />
          </Viewport>
          <Viewport name="Right">
            <OrthoView x={22} size={421} box={[168, 150, 73, 82]} gizmoY={428} axes={["z", "y"]} />
          </Viewport>
        </main>
        <div className="w-3 shrink-0" />
      </div>
      <div className="pointer-events-none absolute inset-y-0 right-0 w-4 bg-linear-to-r from-transparent to-black/25" />
    </div>
  );
}

function Ribbon() {
  return (
    <div className="flex h-[87px] shrink-0 gap-1 overflow-hidden border-b-2 border-[#8a8a8a] bg-linear-to-b from-[#e2e2e2] to-[#f2f2f2] pl-[3px] pt-[2px]">
      {panels.map((panel) => (
        <section key={panel.name} className={"flex h-[73px] shrink-0 flex-col overflow-hidden rounded border border-[#858585] bg-linear-to-b from-[#d2d2d2] to-[#ececec] px-px pt-px " + panel.width}>
          <div className="flex flex-1">
            {panel.groups.map((group, i) => (
              <div key={i} className="flex">
                {i > 0 && <span className="ml-1 mr-[5px] mt-1 h-12 w-px bg-[#a8a8a8]" />}
                {group.map(([top, bottom]) => (
                  <div key={top.label} className="flex w-7 flex-col">
                    <ToolButton tool={top} />
                    {bottom && <ToolButton tool={bottom} />}
                  </div>
                ))}
              </div>
            ))}
          </div>
          <h3 className="relative -mx-px h-[13px] shrink-0 bg-linear-to-b from-[#333] to-[#111] text-center text-[10px] leading-[11px] text-white">
            {panel.name}
            <svg viewBox="0 0 8 8" className="absolute right-[2px] top-[2px] size-2" aria-hidden="true">
              <path d="M4 0v8M1 4h6M2 5l2 3 2-3" fill="none" stroke="#999" strokeWidth="1.500" />
            </svg>
          </h3>
        </section>
      ))}
    </div>
  );
}

function Caret() {
  return (
    <svg viewBox="0 0 6 3" className="h-[3px] w-[6px]" aria-hidden="true">
      <path d="M0 0h6L3 3z" />
    </svg>
  );
}

function CanvasToolbar() {
  return (
    <div className="flex h-[31px] shrink-0 items-center bg-linear-to-b from-white to-[#f5f5f5]">
      <button type="button" aria-label="Open" className="size-7">
        <Icon>
          <path d="M8 13V4h10l4 3v8" fill="#f4f4f4" stroke="#555" />
          <path d="M6 25V14h7l3-3h8v14z" fill="url(#gGreen)" stroke="#186010" strokeWidth="1.500" />
        </Icon>
      </button>
      <button type="button" aria-label="Save" className="ml-[3px] size-7">
        <Icon>
          <path d="M3 4h22v21H6l-3-3z" fill="url(#gSave)" stroke="#0a2a70" strokeWidth="1.500" />
          <path d="M7 5h14v9H7z" fill="#f0f0f0" />
          <path d="M8 17h11v8H8z" fill="#a8b8c8" stroke="#123" />
          <path d="M11 19h3v5h-3z" fill="#0838a0" />
        </Icon>
      </button>
      <span className="ml-[5px] h-[22px] w-px bg-[#bbb]" />
      <div className="relative ml-1 w-[136px]">
        <select aria-label="Zoom" defaultValue="118%" className="block h-5 w-full appearance-none border border-[#7a7a7a] bg-white pl-[2px] text-[10px] text-black">
          <option>118%</option>
          <option>100%</option>
        </select>
        <svg viewBox="0 0 8 5" className="pointer-events-none absolute right-[5px] top-2 h-[5px] w-2" aria-hidden="true">
          <path d="M0 0l4 4 4-4" fill="none" stroke="#444" />
        </svg>
      </div>
      <button type="button" aria-label="Zoom extents" className="ml-[3px] flex items-center gap-[3px]">
        <Icon>
          <path d="M5 12V5h7M16 5h7v7M23 16v7h-7M12 23H5v-7" fill="none" stroke="#333" strokeWidth="4" />
          <path d="M11 11l6 6M17 11l-6 6" stroke="#222" strokeWidth="2" />
        </Icon>
        <Caret />
      </button>
      <button type="button" aria-label="Preview" className="ml-1 flex items-center gap-[3px]">
        <Icon>
          <path d="M3 14q11-14 22 0-11 12-22 0z" fill="#fff" stroke="#222" strokeWidth="1.500" />
          <circle cx="14" cy="13" r="6" fill="#48b8e8" stroke="#0a4a80" />
          <circle cx="14" cy="13" r="2.500" fill="#012" />
        </Icon>
        <Caret />
      </button>
      <button type="button" aria-label="Sketch" className="ml-[3px] size-7">
        <Icon>
          <path d="M3 11q4-3 5 2t-3 9q3 4 8 0" fill="none" stroke="#602018" strokeWidth="1.600" />
          <path d="M10 18L21 4l3 7-9 11-6 1z" fill="url(#gRed)" stroke="#801010" />
          <path d="M10 18l5 4-7 2z" fill="#ecd0a0" stroke="#633" />
        </Icon>
      </button>
      <div className="-mr-2 ml-auto flex">
        <button type="button" aria-label="Shaded preview" className="size-7">
          <Icon>
            <path d="M7 11l6-7 9 4-4 9H6z" fill="#d8d8d8" stroke="#666" />
            <ellipse cx="17" cy="8" rx="5" ry="3" transform="rotate(25 17 8)" fill="#f4f4f4" stroke="#888" />
            <path d="M5 19q9-7 18 0-2 6-9 6t-9-6z" fill="#222" stroke="#666" />
          </Icon>
        </button>
        <button type="button" aria-label="Wire preview" className="size-7">
          <Icon>
            <path d="M5 14L16 3l9 9-9 12H9q-5-4-4-10z" fill="#f4f4f4" stroke="#333" strokeWidth="1.500" />
            <ellipse cx="11" cy="18" rx="4" ry="5" transform="rotate(-35 11 18)" {...thin} />
            <ellipse cx="19" cy="10" rx="3" ry="5" transform="rotate(-40 19 10)" {...thin} />
          </Icon>
        </button>
      </div>
    </div>
  );
}

const port = (cx: number, cy: number, side: "l" | "r") => (
  <path d={side === "l" ? `M${cx + 4} ${cy - 5}a5 5 0 0 0 0 10z` : `M${cx - 4} ${cy - 5}a5 5 0 0 1 0 10z`} fill="#fff" stroke="#000" strokeWidth="2" />
);

function Canvas() {
  return (
    <div className="relative min-h-0 flex-1 overflow-hidden border-l border-[#6c6c6c] bg-[#d4cfc8] font-['Liberation_Serif','Noto_Sans_CJK_SC',serif] text-[13px] text-[#1c1c1c]">
      <svg className="absolute inset-0 size-full" aria-hidden="true">
        <defs>
          <pattern id="hatch" width="4" height="4" patternUnits="userSpaceOnUse">
            <path d="M-1 1l2-2M0 4l4-4M3 5l2-2" stroke="#c0bdb1" />
          </pattern>
          <pattern id="canvasGrid" x="79" y="14" width="176.500" height="58.830" patternUnits="userSpaceOnUse">
            <path d="M0 0.500h177M0.500 0v59" stroke="#b3afa8" fill="none" />
          </pattern>
          <linearGradient id="canvasEdge" x1="0" y1="0" x2="0" y2="1">
            <stop offset="0" stopColor="#000" stopOpacity="0" />
            <stop offset="1" stopColor="#000" stopOpacity="0.350" />
          </linearGradient>
        </defs>
        <rect width="100%" height="308" fill="url(#hatch)" />
        <rect width="100%" height="100%" fill="url(#canvasGrid)" />
        <rect y="268" width="100%" height="40" fill="url(#canvasEdge)" />
        <rect y="308" width="100%" height="1" fill="#000" />
        <rect width="2" height="17" fill="#666" />
        <path d="M0 832.500h6.500v27H0" fill="url(#gGrey)" stroke="#000" />
      </svg>

      {/* groups */}
      <div className="absolute left-[592px] top-[309px] h-[122px] w-[200px] border border-[#a795d2] bg-[#b9a4e6]" />
      <div className="absolute left-[330px] top-[442px] h-[53px] w-[83px] border border-[#a795d2] bg-[#b9a4e6]" />

      <svg className="absolute inset-0 size-full" aria-hidden="true">
        <g fill="none" stroke="#575450" strokeWidth="3.500">
          <path d="M463 334H601" />
          <path d="M462 387C532 387 532 358 601 358" />
          <path d="M405 468C503 468 503 382 601 382" />
        </g>
        {port(251, 334, "l")}
        {port(463, 334, "r")}
        {port(461, 387, "r")}
        {port(602, 334, "l")}
        {port(602, 358, "l")}
        {port(602, 382, "l")}
        {port(602, 405, "l")}
        {port(782, 370, "r")}
        {port(339, 468, "l")}
        {port(403, 468, "r")}
      </svg>

      <div className="absolute left-[253px] top-[319px] flex h-[33px] w-[208px] items-center justify-center rounded-[3px] border border-[#333] bg-[#fffa5a] pb-1 pr-[10px] font-['Liberation_Mono',monospace] text-[12px] text-[#5f7d20]">
        BOX1
      </div>

      <div className="absolute left-[177px] top-[374px] flex h-[27px] w-[282px] items-center rounded-[4px] border border-[#222] bg-linear-to-b from-[#f2f2f2] to-[#c2c2c2] pl-[7px] pr-[5px] shadow-[inset_0_1px_0_white]">
        <span className="border-r border-[#aaa] pr-[7px] leading-[22px]">DirectShape Categories</span>
        <span className="flex-1 pl-[30px] text-[14px] font-light leading-[20px]">常规模型</span>
        <svg viewBox="0 0 16 15" className="h-[15px] w-4" aria-hidden="true">
          <path d="M1 1h14L8 14z" fill="#333" stroke="#000" strokeWidth="1.500" />
        </svg>
      </div>

      <div className="absolute left-[604px] top-[320px] flex h-[99px] w-[176px] items-center rounded-[3px] border border-[#222] bg-linear-to-b from-[#b2b0be] to-[#8c8a99] pr-[11px] shadow-[inset_0_10px_0_#c3c2cc]">
        <div className="flex w-[59px] flex-col text-right leading-[24px]">
          <span>Name</span>
          <span>Category</span>
          <span>Geometry</span>
          <span>Material</span>
        </div>
        <svg viewBox="0 0 22 26" className="ml-2 h-[26px] w-[22px]" aria-hidden="true">
          <path d="M11 1l9 6v11l-9 7-9-7V7z" fill="#c8c8c8" stroke="#aaa" />
          <path d="M11 3l6 5q4 10-6 10T5 8z" fill="url(#rTeal)" stroke="#1a6070" />
        </svg>
        <span className="ml-auto">DirectShape</span>
      </div>
      <div className="absolute left-[604px] top-[420px] h-4 w-[176px] border border-black bg-linear-to-b from-[#ff3a08] to-[#c02c04] text-center leading-[13px]">178ms</div>

      <div className="absolute left-[341px] top-[454px] flex h-[29px] w-[60px] items-center justify-center rounded-[3px] border border-[#222] bg-linear-to-b from-[#e0e0e6] via-[#a5a3b2] to-[#8c8a99]">
        <Icon>
          <path d="M0 14L7 2h14l7 12-7 12H7z" fill="#222" stroke="#000" />
          <path d="M3 14l6-10h10l6 10-6 10H9z" fill="none" stroke="#666" />
          <path d="M7 14l7-8 8 5-6 10q-5 2-9-2z" fill="url(#gGrey)" stroke="#fff" />
        </Icon>
      </div>
      <div className="absolute left-[341px] top-[483px] h-[17px] w-[60px] border border-black bg-linear-to-b from-[#d0d0cc] to-[#a4a6a0] text-center leading-[14px]">7ms</div>

      <div className="absolute left-[519px] top-[283px] h-[19px] w-[346px] whitespace-nowrap border border-black bg-linear-to-b from-white to-[#dcdcdc] text-center leading-[16px]">
        Use a DS Category selector and a DS from geometry component
      </div>
      <div className="absolute left-[256px] top-[417px] h-[19px] w-[229px] whitespace-nowrap border border-black bg-linear-to-b from-white to-[#dcdcdc] text-center leading-[16px]">
        Right-click to select multiple Rhino breps
      </div>

      <svg className="pointer-events-none absolute inset-0 size-full" aria-hidden="true">
        <path d="M686 301l6 7 6-7" fill="#e4e4e4" stroke="#333" />
        <path d="M365 435l6 7 6-7" fill="#e4e4e4" stroke="#333" />
        <path d="M686 421l6-7 6 7" fill="#ff3a08" stroke="#801800" />
        <path d="M365 484l6-6 6 6" fill="#e0e0dc" stroke="#555" strokeWidth="0.500" />
      </svg>

      <div className="absolute bottom-[42px] right-[74px] flex items-center whitespace-nowrap font-['Noto_Sans_CJK_SC',sans-serif] text-[56px] font-light leading-[80px] text-white [text-shadow:2px_2px_1px_#444]">
        <svg viewBox="0 0 90 78" className="mr-[6px] h-[78px] w-[90px]" aria-hidden="true">
          <g fill="#6c6a66" transform="translate(1 2)">
            <path d="M31 1C14 1 1 13 1 28c0 9 4 15 11 21l-3 11 12-6q6 2 11 2-2-24 29-31C58 10 47 1 31 1z" />
            <path d="M60 27c-15 0-26 10-26 23s11 23 26 23q6 0 11-2l9 5-2-8c6-5 9-11 9-18 0-13-12-23-27-23z" />
          </g>
          <path d="M31 1C14 1 1 13 1 28c0 9 4 15 11 21l-3 11 12-6q6 2 11 2-2-24 29-31C58 10 47 1 31 1z" fill="#fafaf8" />
          <path d="M60 27c-15 0-26 10-26 23s11 23 26 23q6 0 11-2l9 5-2-8c6-5 9-11 9-18 0-13-12-23-27-23z" fill="#fafaf8" stroke="#8a8884" strokeWidth="1" />
          <g fill="#c8c4bc" stroke="#6c6a66" strokeWidth="1.500">
            <circle cx="20" cy="20" r="3.500" />
            <circle cx="44" cy="20" r="3.500" />
            <circle cx="51" cy="41" r="3" />
            <circle cx="70" cy="41" r="3" />
          </g>
        </svg>
        SHELTER舍德建筑
      </div>
    </div>
  );
}

function Grasshopper() {
  return (
    <div className="flex min-w-0 flex-col overflow-hidden border-l border-[#1c6c96] bg-[#f0f0f0] font-['Liberation_Mono',monospace] text-[10px] text-black">
      <h1 className="h-[30px] shrink-0 bg-[#005580] pl-2 font-['Noto_Sans_CJK_SC',sans-serif] text-[14px] leading-[27px] text-[#e8f2f8]">Grasshopper - rhino to revit*</h1>
      <nav className="flex h-6 shrink-0 items-center gap-[17px] bg-linear-to-r from-[#f0f0f0] to-[#fdfdfd] pl-[11px] pt-[2px]">
        {menus.map((menu) => (
          <button key={menu} type="button">{menu}</button>
        ))}
      </nav>
      <nav className="flex h-[23px] shrink-0 whitespace-nowrap text-[#6a6a6a]">
        <button type="button" className="w-[55px] rounded-t-lg border border-b-0 border-[#999] bg-linear-to-b from-white to-[#eee] pb-1 text-black">Params</button>
        <div className="flex flex-1 gap-[18px] border-b border-[#999] pl-[6px] pt-[2px]">
          {ghTabs.map((tab) => (
            <button key={tab} type="button">{tab}</button>
          ))}
        </div>
      </nav>
      <Ribbon />
      <div className="flex min-h-0 flex-1 flex-col pl-px">
        <CanvasToolbar />
        <Canvas />
      </div>
      <footer className="h-[18px] shrink-0 border-t border-white pl-[6px]">
        <svg viewBox="0 0 12 16" className="h-4 w-3" aria-label="...">
          <path d="M0 11h2v2H0zM4 11h2v2H4zM8 11h2v2H8z" />
        </svg>
      </footer>
    </div>
  );
}

export default function App() {
  return (
    <div className="grid h-screen grid-cols-[minmax(0,1000px)_minmax(0,1fr)] grid-rows-[minmax(0,1fr)] overflow-hidden">
      <Defs />
      <Rhino />
      <Grasshopper />
    </div>
  );
}
